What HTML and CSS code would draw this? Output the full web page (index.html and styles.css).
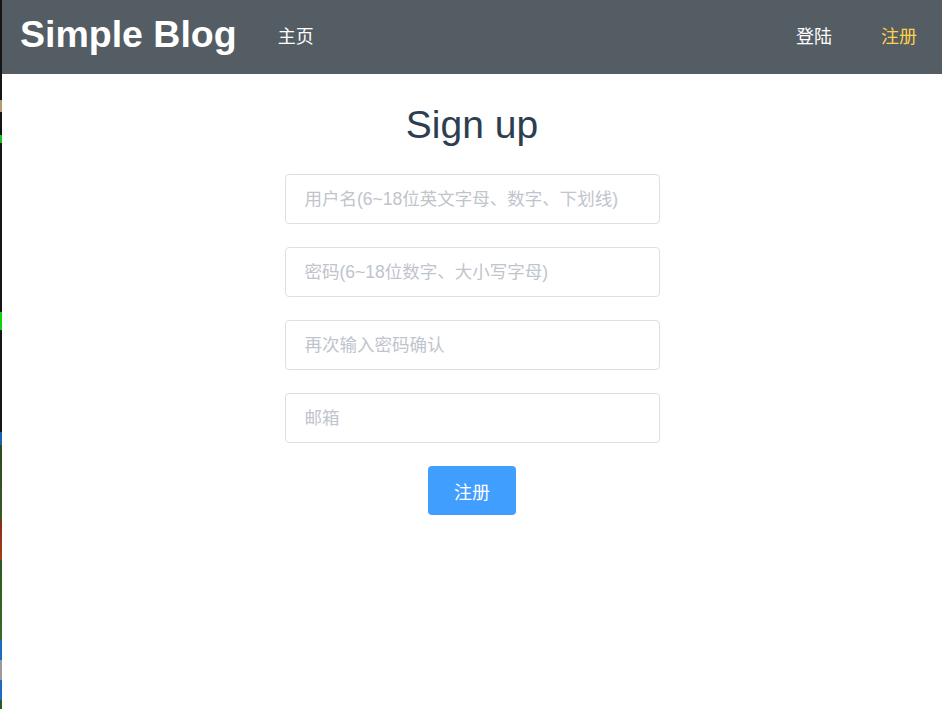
FILE: index.html
```html
<!DOCTYPE html>
<html lang="zh-CN">
<head>
<meta charset="utf-8">
<title>Simple Blog - Sign up</title>
<link rel="stylesheet" href="styles.css">
</head>
<body>
<div class="strip"></div>
<div class="app">
  <header class="topbar">
    <div class="brand">Simple Blog</div>
    <nav class="nav-left"><a class="nav-item">主页</a></nav>
    <nav class="nav-right">
      <a class="nav-item">登陆</a>
      <a class="nav-item active">注册</a>
    </nav>
  </header>
  <main class="content">
    <h1 class="title">Sign up</h1>
    <form class="form">
      <input class="field" type="text" placeholder="用户名(6~18位英文字母、数字、下划线)">
      <input class="field" type="password" placeholder="密码(6~18位数字、大小写字母)">
      <input class="field" type="password" placeholder="再次输入密码确认">
      <input class="field" type="text" placeholder="邮箱">
      <button class="submit" type="button">注册</button>
    </form>
  </main>
</div>
</body>
</html>
```
FILE: styles.css
```css
html, body {
  margin: 0;
  padding: 0;
  height: 100%;
}
body {
  display: flex;
  font-family: "Liberation Sans", "Noto Sans CJK SC", sans-serif;
  background: #fff;
  overflow: hidden;
}
.strip {
  width: 2px;
  flex: none;
  background: linear-gradient(to bottom,
    #151515 0, #151515 100px, #b59a6a 100px, #b59a6a 112px,
    #151515 112px, #151515 135px, #19c019 135px, #19c019 143px,
    #151515 143px, #151515 312px, #10d010 312px, #10d010 330px,
    #151515 330px, #151515 432px, #1d5fa8 432px, #1d5fa8 445px,
    #2f4a22 445px, #3a5a20 520px, #8a2a1a 520px, #a0401c 560px,
    #2d5a1f 560px, #3a6a24 640px, #1e6bc0 640px, #1e6bc0 660px,
    #9a9a9a 660px, #9a9a9a 680px, #1e6bc0 680px, #1e6bc0 700px,
    #2d5a1f 700px);
}
.app {
  flex: 1;
  display: flex;
  flex-direction: column;
}
.topbar {
  box-sizing: border-box;
  height: 74px;
  background: #545c64;
  display: flex;
  align-items: center;
  padding: 0 25px 4px 18px;
  flex: none;
}
.brand {
  color: #fff;
  font-weight: bold;
  font-size: 37.5px;
  margin-bottom: 2px;
}
.nav-left {
  margin-left: 41px;
  flex: 1;
  display: flex;
}
.nav-right {
  display: flex;
  gap: 49px;
}
.nav-item {
  color: #fff;
  font-size: 18px;
  text-decoration: none;
}
.nav-item.active {
  color: #ffd04b;
}
.content {
  display: flex;
  flex-direction: column;
  align-items: center;
}
.title {
  margin: 23px 0 0;
  font-size: 39px;
  font-weight: normal;
  line-height: 56px;
  color: #2c3e50;
}
.form {
  width: 375px;
  margin-top: 21px;
  display: flex;
  flex-direction: column;
  align-items: center;
  gap: 23px;
}
.field {
  box-sizing: border-box;
  width: 100%;
  height: 50px;
  border: 1px solid #dcdfe6;
  border-radius: 4px;
  padding: 0 19px;
  font-family: "Liberation Sans", "Noto Sans CJK SC", sans-serif;
  font-size: 17.5px;
  color: #606266;
  outline: none;
}
.field::placeholder {
  color: #c0c4cc;
}
.submit {
  width: 88px;
  height: 49px;
  border: none;
  border-radius: 4px;
  background: #409eff;
  color: #fff;
  font-family: "Liberation Sans", "Noto Sans CJK SC", sans-serif;
  font-size: 18px;
  padding: 0;
}
```
